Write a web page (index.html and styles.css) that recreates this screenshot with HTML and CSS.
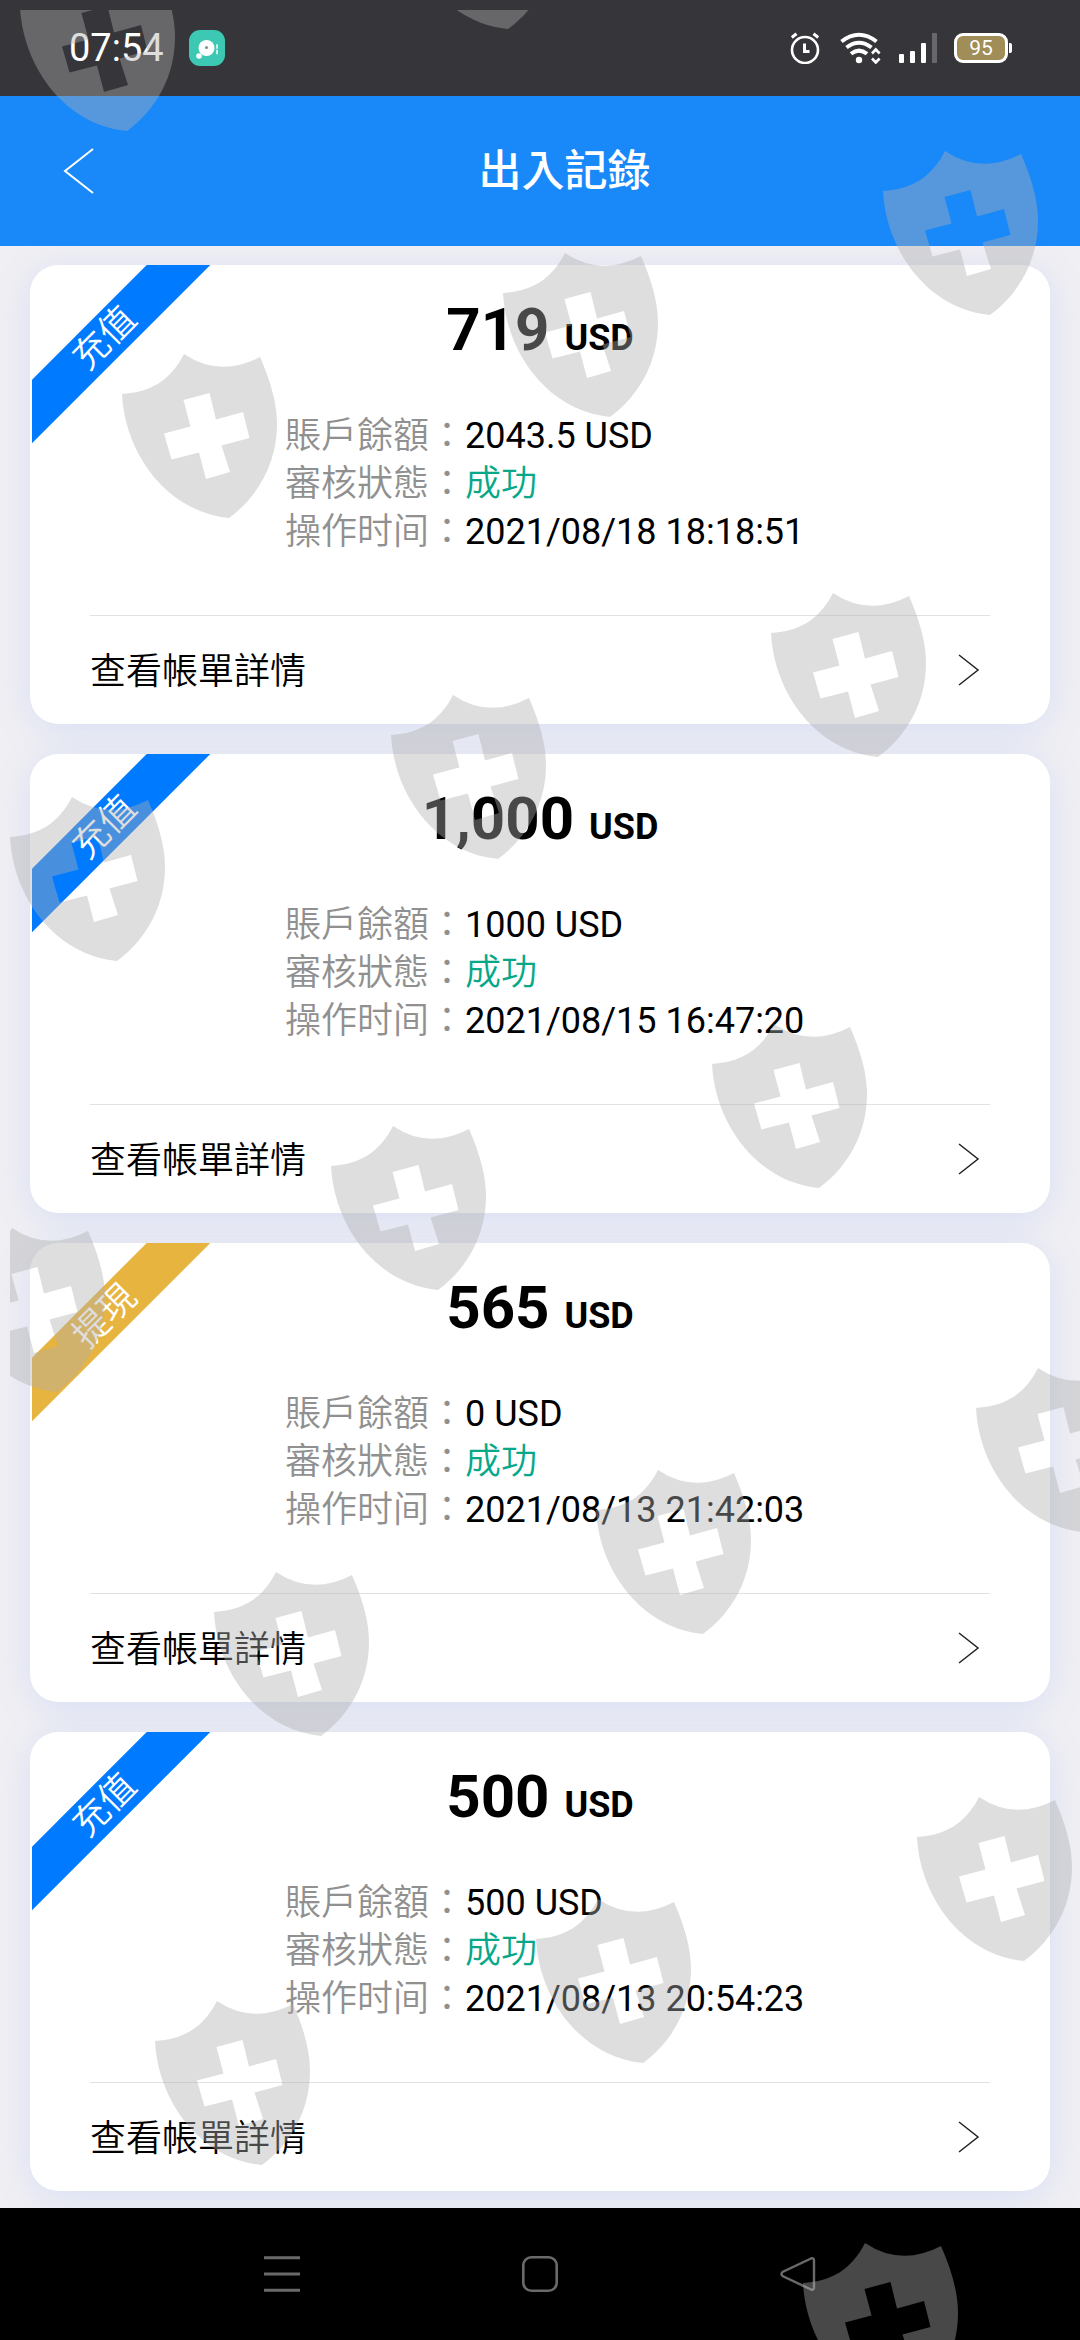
FILE: index.html
```html
<!DOCTYPE html>
<html lang="zh-Hant">
<head>
<meta charset="utf-8">
<meta name="viewport" content="width=device-width">
<title>出入記錄</title>
<link rel="stylesheet" href="styles.css">
</head>
<body>
<div class="statusbar">
  <span class="clock">07:54</span>
  <svg class="app-badge" viewBox="0 0 36 36" width="36" height="36"><rect width="36" height="36" rx="11" fill="#3cc8b2"/><circle cx="17.500" cy="18" r="8" fill="#fff"/><circle cx="17.500" cy="17.500" r="1.600" fill="#7f9a96"/><circle cx="10" cy="26" r="2.800" fill="#fff"/><path d="M28 15v3M28 20.500v3" stroke="#c9efe9" stroke-width="2" stroke-linecap="round"/></svg>
  <div class="status-icons">
    <svg viewBox="0 0 30 32" width="30" height="32" fill="none" stroke="#fff"><circle cx="15" cy="18" r="13" stroke-width="2.600"/><path d="M14.500 11.500v8h5" stroke-width="3"/><path d="M1.800 5.500L6.500 1.800M28.200 5.500L23.500 1.800" stroke-width="3"/></svg>
    <svg viewBox="0 0 42 32" width="42" height="32" fill="none" stroke="#fff"><path d="M1.500 9.500Q19 -4 36.500 9.500M6.500 15.500Q19 6 31.500 15.500M11 21.800Q19 15.500 27 21.800" stroke-width="4"/><circle cx="19" cy="28" r="3.200" fill="#fff" stroke="none"/><path d="M32 21.500l3.800-4 3.800 4M32 26.500l3.800 4 3.800-4" stroke-width="2.600"/></svg>
    <svg viewBox="0 0 40 32" width="40" height="32" fill="#fff"><rect x="1" y="22" width="5" height="9" rx="1"/><rect x="12" y="19" width="5" height="12" rx="1"/><rect x="23" y="11" width="5" height="20" rx="1"/><rect x="34" y="1" width="5" height="30" rx="1" fill="#68686b"/></svg>
    <span class="battery">95</span>
  </div>
</div>
<header class="navbar">
  <button class="back" type="button" aria-label="返回"><svg viewBox="0 0 32 48" width="32" height="48"><path d="M30 2L2 24 30 46" fill="none" stroke="#fff" stroke-width="2"/></svg></button>
  <h1 class="title">出入記錄</h1>
</header>
<main class="records">
  <article class="card">
    <div class="ribbon"><span class="ribbon-text">充值</span></div>
    <p class="amount">719 <small class="unit">USD</small></p>
    <dl class="facts">
      <dt>賬戶餘額：</dt><dd>2043.5 USD</dd>
      <dt>審核狀態：</dt><dd class="ok">成功</dd>
      <dt>操作时间：</dt><dd>2021/08/18 18:18:51</dd>
    </dl>
    <a class="detail" href="#"><span>查看帳單詳情</span><svg viewBox="0 0 24 34" width="24" height="34"><path d="M2 2L21 17 2 32" fill="none" stroke="#222" stroke-width="1.500"/></svg></a>
  </article>
  <article class="card">
    <div class="ribbon"><span class="ribbon-text">充值</span></div>
    <p class="amount">1,000 <small class="unit">USD</small></p>
    <dl class="facts">
      <dt>賬戶餘額：</dt><dd>1000 USD</dd>
      <dt>審核狀態：</dt><dd class="ok">成功</dd>
      <dt>操作时间：</dt><dd>2021/08/15 16:47:20</dd>
    </dl>
    <a class="detail" href="#"><span>查看帳單詳情</span><svg viewBox="0 0 24 34" width="24" height="34"><path d="M2 2L21 17 2 32" fill="none" stroke="#222" stroke-width="1.500"/></svg></a>
  </article>
  <article class="card">
    <div class="ribbon"><span class="ribbon-text withdraw">提現</span></div>
    <p class="amount">565 <small class="unit">USD</small></p>
    <dl class="facts">
      <dt>賬戶餘額：</dt><dd>0 USD</dd>
      <dt>審核狀態：</dt><dd class="ok">成功</dd>
      <dt>操作时间：</dt><dd>2021/08/13 21:42:03</dd>
    </dl>
    <a class="detail" href="#"><span>查看帳單詳情</span><svg viewBox="0 0 24 34" width="24" height="34"><path d="M2 2L21 17 2 32" fill="none" stroke="#222" stroke-width="1.500"/></svg></a>
  </article>
  <article class="card">
    <div class="ribbon"><span class="ribbon-text">充值</span></div>
    <p class="amount">500 <small class="unit">USD</small></p>
    <dl class="facts">
      <dt>賬戶餘額：</dt><dd>500 USD</dd>
      <dt>審核狀態：</dt><dd class="ok">成功</dd>
      <dt>操作时间：</dt><dd>2021/08/13 20:54:23</dd>
    </dl>
    <a class="detail" href="#"><span>查看帳單詳情</span><svg viewBox="0 0 24 34" width="24" height="34"><path d="M2 2L21 17 2 32" fill="none" stroke="#222" stroke-width="1.500"/></svg></a>
  </article>
</main>
<nav class="system-nav">
  <button type="button" aria-label="最近"><svg viewBox="0 0 36 36" width="36" height="36"><path d="M0 1.800h36M0 18h36M0 34.200h36" stroke="#6a6a6a" stroke-width="3"/></svg></button>
  <button type="button" aria-label="主頁"><svg viewBox="0 0 36 36" width="36" height="36"><rect x="1.300" y="1.300" width="33.400" height="33.400" rx="8" fill="none" stroke="#6a6a6a" stroke-width="2.600"/></svg></button>
  <button type="button" aria-label="返回"><svg viewBox="0 0 36 36" width="36" height="36"><path d="M31 2.500L2.500 16Q.5 18 2.500 20L31 33.500Q34 34.500 34 31.500V4.500Q34 1.500 31 2.500Z" fill="none" stroke="#6a6a6a" stroke-width="2.400"/></svg></button>
</nav>
<svg class="watermark" aria-hidden="true">
  <defs>
    <path id="shield" fill-rule="evenodd" d="M63 0Q99 24 139 3C150 28 156 50 156 70C156 108 138 142 108 164C46 158 4 100 1 40C30 38 49 27 63 0ZM62.500 46L88.500 39 95 65.500 122 58 128.500 84 100.500 91.500 109 118 85 125 78 98.500 50.500 105.500 43 79.500 69.500 72.500Z"/>
  </defs>
  <use href="#shield" x="9" y="-43"/>
  <use href="#shield" x="390" y="-145"/>
  <use href="#shield" x="111" y="344"/>
  <use href="#shield" x="492" y="243"/>
  <use href="#shield" x="872" y="141"/>
  <use href="#shield" x="-1" y="787"/>
  <use href="#shield" x="380" y="685"/>
  <use href="#shield" x="760" y="583"/>
  <use href="#shield" x="-61" y="1218"/>
  <use href="#shield" x="320" y="1116"/>
  <use href="#shield" x="701" y="1014"/>
  <use href="#shield" x="203" y="1562"/>
  <use href="#shield" x="585" y="1460"/>
  <use href="#shield" x="965" y="1358"/>
  <use href="#shield" x="144" y="1991"/>
  <use href="#shield" x="525" y="1889"/>
  <use href="#shield" x="906" y="1787"/>
  <use href="#shield" x="792" y="2233"/>
</svg>
</body>
</html>
```
FILE: styles.css
```css
* {
  box-sizing: border-box;
}

body {
  position: relative;
  margin: 0;
  background: #f0eff3;
  color: #000;
  font-family: Roboto, "Noto Sans CJK TC", sans-serif;
  font-size: 36px;
  line-height: 48px;
}

button {
  display: flex;
  align-items: center;
  justify-content: center;
  margin: 0;
  padding: 0;
  border: 0;
  background: none;
}

svg {
  display: block;
  flex: none;
}

.statusbar {
  display: flex;
  align-items: center;
  height: 96px;
  padding: 0 67px 0 69px;
  background: #36363a;
  color: #fff;
}

.clock {
  font-size: 38px;
}

.app-badge {
  margin-left: 25px;
}

.status-icons {
  display: flex;
  align-items: center;
  gap: 16px;
  margin-left: auto;
}

.status-icons svg:first-child {
  margin-right: 4px;
}

.battery {
  position: relative;
  width: 54px;
  height: 30px;
  margin-right: 5px;
  border: 3px solid #fff;
  border-radius: 9px;
  background: #a08d57;
  font-size: 21px;
  line-height: 25px;
  text-align: center;
}

.battery::after {
  content: "";
  position: absolute;
  top: 7px;
  right: -7px;
  width: 3px;
  height: 10px;
  border-radius: 0 2px 2px 0;
  background: #fff;
}

.navbar {
  display: flex;
  align-items: center;
  height: 150px;
  padding-right: 51px;
  background: #1989fa;
  color: #fff;
}

.back {
  width: 100px;
  height: 100px;
  padding-left: 58px;
}

.title {
  flex: 1;
  margin: 0;
  font-size: 43px;
  font-weight: 500;
  text-align: center;
}

.records {
  display: flex;
  flex-direction: column;
  gap: 30px;
  padding: 19px 30px 17px;
  overflow: hidden;
}

.card {
  position: relative;
  padding: 30px 60px 0;
  border-radius: 28px;
  background: #fff;
  box-shadow: 0 6px 36px rgba(120, 160, 255, 0.2);
}

.ribbon {
  position: absolute;
  top: 0;
  left: 2px;
  width: 180px;
  height: 180px;
  overflow: hidden;
}

.ribbon-text {
  position: absolute;
  top: 51px;
  left: -77px;
  width: 300px;
  height: 45px;
  background: #007aff;
  color: #fff;
  font-weight: 350;
  line-height: 45px;
  text-align: center;
  transform: rotate(-45deg);
}

.ribbon-text.withdraw {
  background: #e8b440;
}

.amount {
  margin: 0;
  font-size: 60px;
  font-weight: 700;
  line-height: 70px;
  text-align: center;
}

.unit {
  font-size: 36px;
  line-height: 36px;
}

.facts {
  display: grid;
  grid-template-columns: 180px 1fr;
  grid-auto-rows: 48px;
  margin: 47px 0 0 195px;
  padding-bottom: 59px;
}

.facts dt {
  color: #909090;
  font-weight: 350;
}

.facts dd {
  margin: 0;
}

.facts .ok {
  color: #07a889;
  font-weight: 350;
}

.detail {
  display: flex;
  align-items: center;
  justify-content: space-between;
  height: 109px;
  padding-right: 9px;
  border-top: 1px solid #e2e2e2;
  color: #000;
  font-weight: 350;
  text-decoration: none;
}

.detail span {
  padding-top: 4px;
}

.system-nav {
  display: flex;
  justify-content: center;
  height: 132px;
  background: #000;
}

.system-nav button {
  width: 258px;
}

.watermark {
  position: absolute;
  top: 10px;
  left: 10px;
  width: calc(100% - 10px);
  height: calc(100% - 10px);
  overflow: hidden;
  fill: #b0b0b0;
  fill-opacity: 0.41;
  pointer-events: none;
}
```
